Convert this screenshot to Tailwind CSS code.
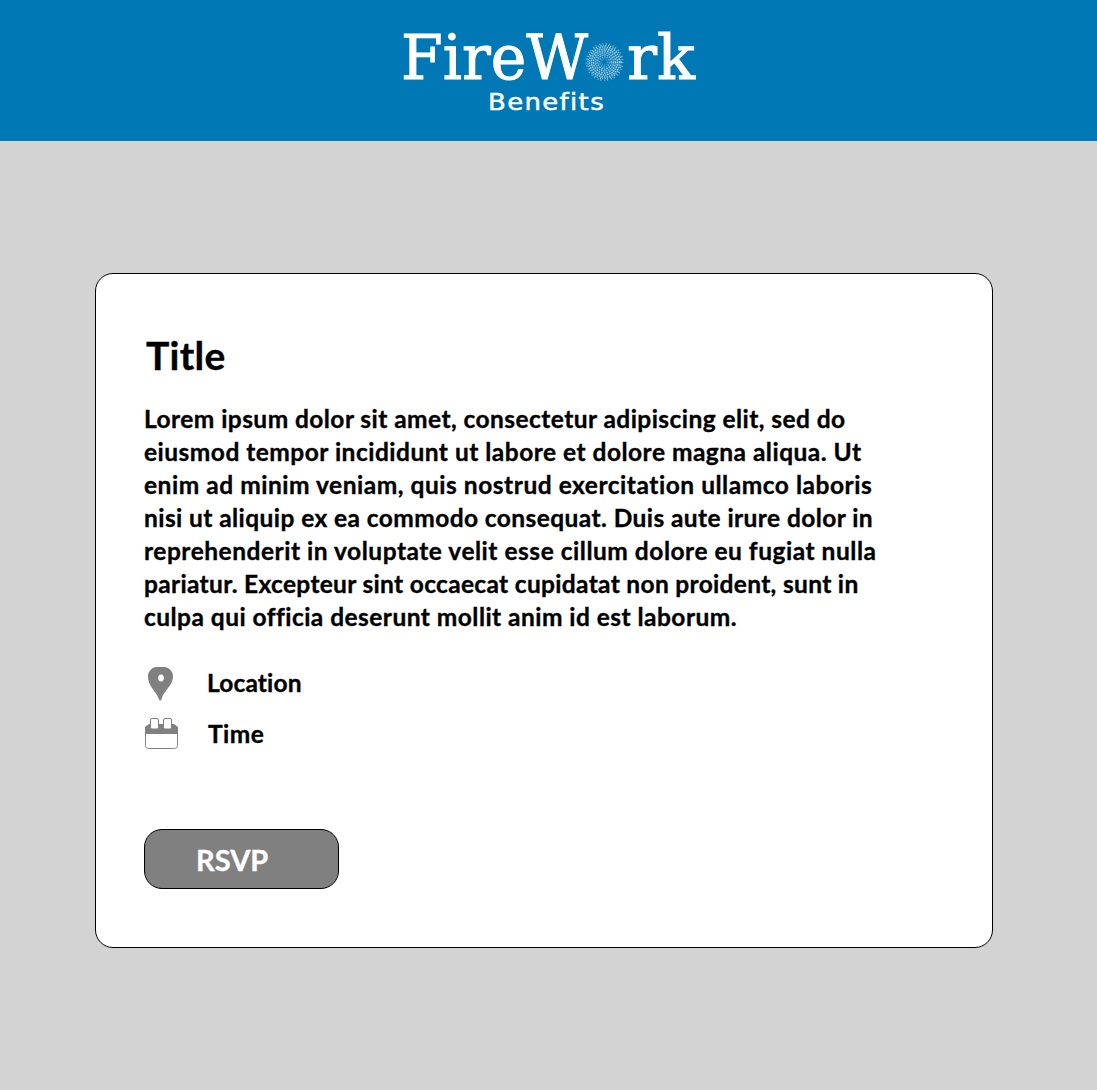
<!DOCTYPE html>
<html lang="en">
<head>
<meta charset="utf-8">
<title>FireWork Benefits</title>
<script src="https://cdn.jsdelivr.net/npm/@tailwindcss/browser@4"></script>
</head>
<body class="min-h-screen bg-[#d3d3d3] font-['Lato',sans-serif] font-bold text-black [font-variant-ligatures:none]">
<header class="flex h-[141px] justify-center bg-[#0078b6]">
  <svg class="h-[141px] w-full" viewBox="0 0 1097 141" fill="#fff" role="img" aria-label="FireWork Benefits">
    <g font-family="DejaVu Serif, serif" font-size="62" font-weight="400" stroke="#fff" stroke-width="1">
      <text x="401" y="79" textLength="187" lengthAdjust="spacingAndGlyphs">FireW</text>
      <text x="627" y="79" textLength="68" lengthAdjust="spacingAndGlyphs">rk</text>
    </g>
    <g fill="none" stroke="#a9d0e6" stroke-width="1.5">
      <circle cx="604.5" cy="62" r="3" stroke-dasharray="1 1" stroke-opacity=".4"/>
      <circle cx="604.5" cy="62" r="5" stroke-dasharray="1.5 1" stroke-opacity=".6"/>
      <circle cx="604.5" cy="62" r="7" stroke-dasharray="1.7 .8" stroke-opacity=".8"/>
      <circle cx="604.5" cy="62" r="9" stroke-dasharray="1.6 .7" stroke-opacity=".8"/>
      <circle cx="604.5" cy="62" r="11" stroke-dasharray="1.8 .9" stroke-opacity=".9"/>
      <circle cx="604.5" cy="62" r="13" stroke-dasharray="1.5 .8"/>
      <circle cx="604.5" cy="62" r="15" stroke-dasharray="1.4 1.1"/>
      <circle cx="604.5" cy="62" r="16.600" stroke-dasharray="1.2 1.7 .8 1.2"/>
      <circle cx="604.5" cy="62" r="18.200" stroke-dasharray="1 2.9 1.2 1.8" stroke-opacity=".7"/>
    </g>
    <text x="488" y="110" font-family="DejaVu Sans, sans-serif" font-size="23.5" font-weight="400" stroke="#fff" stroke-width=".5" letter-spacing="1.2" textLength="117" lengthAdjust="spacingAndGlyphs">Benefits</text>
  </svg>
</header>
<main class="pt-[132px] pl-[95px]">
  <article class="h-[675px] w-[898px] rounded-[18px] border border-black bg-white pt-[55px] pl-12 [-webkit-text-stroke-width:0.35px]">
    <h1 class="pl-0.5 text-[39px] leading-[52px] tracking-[0.3px]">Title</h1>
    <p class="mt-[21px] text-[24.5px] leading-[33px] whitespace-nowrap">
      <span class="tracking-[0.44px]">Lorem ipsum dolor sit amet, consectetur adipiscing elit, sed do</span><br>
      <span class="tracking-[0.49px]">eiusmod tempor incididunt ut labore et dolore magna aliqua. Ut</span><br>
      <span class="tracking-[0.53px]">enim ad minim veniam, quis nostrud exercitation ullamco laboris</span><br>
      <span class="tracking-[0.42px]">nisi ut aliquip ex ea commodo consequat. Duis aute irure dolor in</span><br>
      <span class="tracking-[0.52px]">reprehenderit in voluptate velit esse cillum dolore eu fugiat nulla</span><br>
      <span class="tracking-[0.32px]">pariatur. Excepteur sint occaecat cupidatat non proident, sunt in</span><br>
      <span class="tracking-[0.46px]">culpa qui officia deserunt mollit anim id est laborum.</span>
    </p>
    <ul class="mt-[32px] text-[24.5px] leading-[35px]">
      <li class="flex h-[51px]">
        <svg class="mt-px h-[35px] w-[63px]" viewBox="0 0 63 35" fill="#808080"><path fill-rule="evenodd" d="M12 1h9c5 1 8 5 8 9 0 5-2 8-5 12l-5 7-2 5.500h-1.500L13 29l-5-7c-3-4-4-8-4-12 0-4 3-8 8-9zM17 8.500c-2 0-3 2-3 3.500s1 3.500 3 3.500 3-2 3-3.500-1-3.500-3-3.500z"/></svg>
        <span class="tracking-[0.15px]">Location</span>
      </li>
      <li class="flex">
        <svg class="mt-px h-[35px] w-[63px]" viewBox="0 0 63 35"><path d="M1 17v-7l4-3h25l4 3v7z" fill="#808080"/><path d="M1.500 16.500v12c0 2 1 3 4 3h24c3 0 4-1 4-3v-12z" fill="#fff" stroke="#808080"/><rect x="6.500" y="1.500" width="8" height="10.500" rx="1.500" fill="#fff" stroke="#808080"/><rect x="19.500" y="1.500" width="8" height="10.500" rx="1.500" fill="#fff" stroke="#808080"/></svg>
        <span class="pl-px tracking-[0.5px]">Time</span>
      </li>
    </ul>
    <button class="mt-[77px] flex h-[60px] w-[195px] items-center rounded-[18px] border border-black bg-[#808080] pt-px pl-[51px] text-[29px] text-white">RSVP</button>
  </article>
</main>
</body>
</html>
